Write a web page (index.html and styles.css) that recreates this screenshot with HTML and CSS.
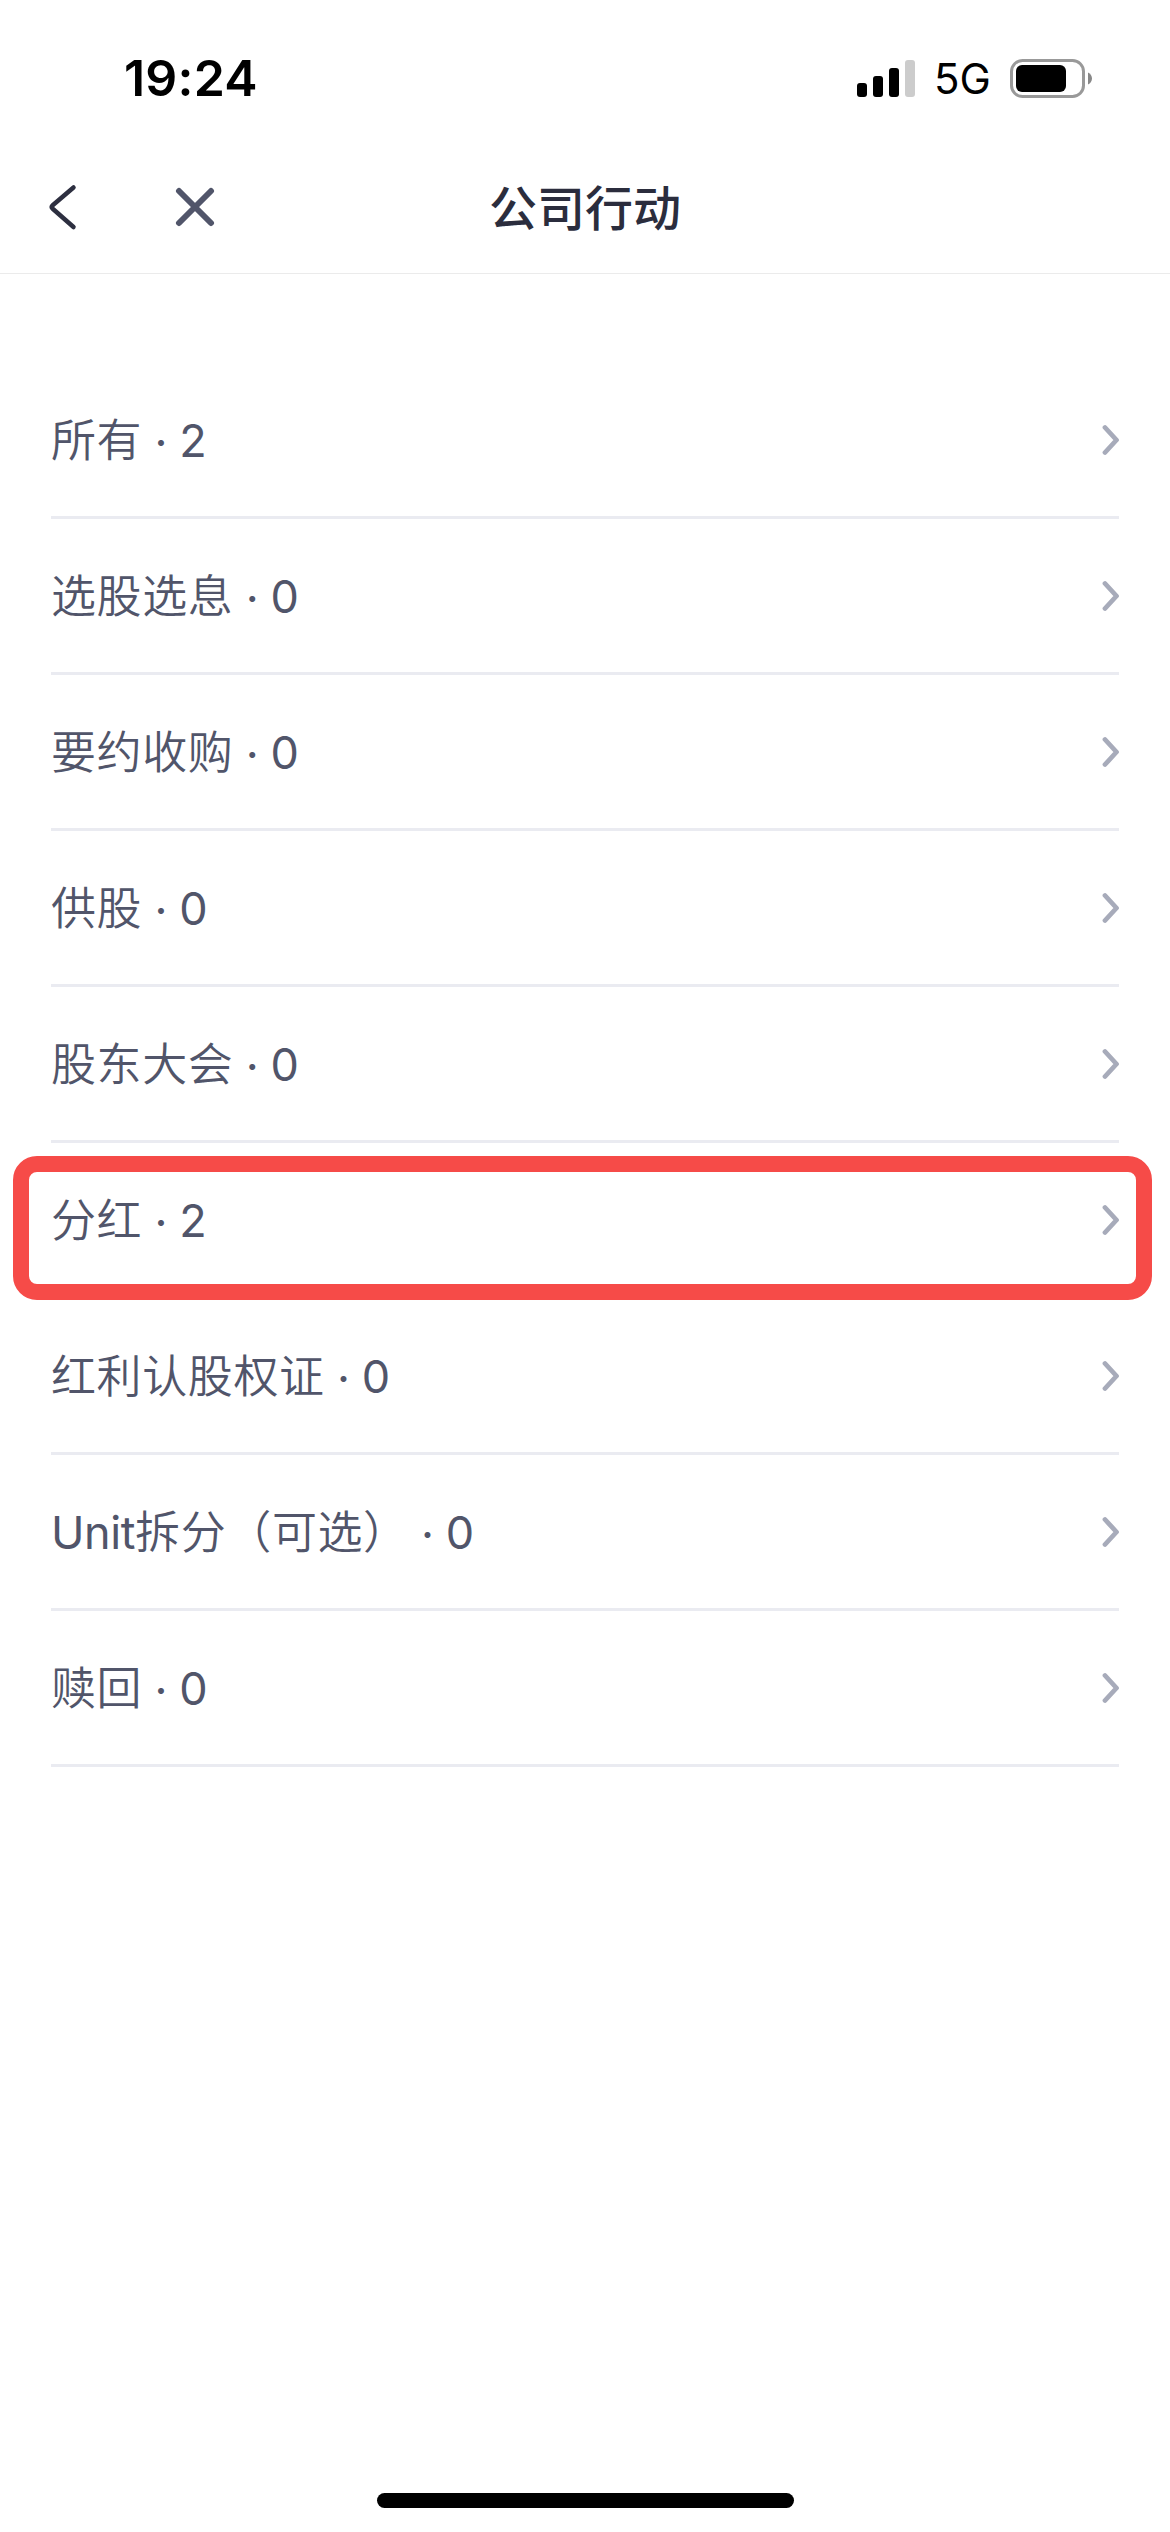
FILE: index.html
```html
<!DOCTYPE html>
<html lang="zh-CN">
<head>
<meta charset="utf-8">
<title>公司行动</title>
<link rel="stylesheet" href="styles.css">
</head>
<body>
<svg class="defs" aria-hidden="true"><symbol id="chevron" viewBox="0 0 18 32"><path d="M4 3.5 15.5 16 4 28.5"/></symbol></svg>
<div class="screen">
  <div class="status">
    <span class="time">19:24</span>
    <div class="indicators">
      <svg class="signal" width="58" height="38" viewBox="0 0 58 38"><rect y="24" width="10" height="14" rx="3"/><rect x="16" y="17" width="10" height="21" rx="3"/><rect x="32" y="9" width="10" height="29" rx="3"/><rect x="48" y="1" width="10" height="37" rx="3" fill="#ccc"/></svg>
      <span class="network">5G</span>
      <svg class="battery" width="83" height="39" viewBox="0 0 83 39"><rect x="1.5" y="1.5" width="72" height="36" rx="11" fill="none" stroke="#999" stroke-width="3"/><rect x="6" y="6" width="50" height="27" rx="6"/><path d="M78 13.5C80.5 14.5 82 17 82 19.5S80.500 24.500 78 25.500Z" fill="#888"/></svg>
    </div>
  </div>
  <header class="navbar">
    <div class="actions">
      <svg class="back" width="30" height="48" viewBox="0 0 30 48"><path d="M25.500 4.500 4.700 22.200Q2.500 24 4.700 25.800L25.500 44"/></svg>
      <svg class="close" width="40" height="40" viewBox="0 0 40 40"><path d="M4 4 36 36M36 4 4 36"/></svg>
    </div>
    <h1 class="title">公司行动</h1>
  </header>
  <ul class="list">
    <li class="row"><span class="label">所有<span class="count"> <span class="dot">·</span> 2</span></span><svg class="chevron"><use href="#chevron"/></svg></li>
    <li class="row"><span class="label">选股选息<span class="count"> <span class="dot">·</span> 0</span></span><svg class="chevron"><use href="#chevron"/></svg></li>
    <li class="row"><span class="label">要约收购<span class="count"> <span class="dot">·</span> 0</span></span><svg class="chevron"><use href="#chevron"/></svg></li>
    <li class="row"><span class="label">供股<span class="count"> <span class="dot">·</span> 0</span></span><svg class="chevron"><use href="#chevron"/></svg></li>
    <li class="row"><span class="label">股东大会<span class="count"> <span class="dot">·</span> 0</span></span><svg class="chevron"><use href="#chevron"/></svg></li>
    <li class="row marked"><span class="label">分红<span class="count"> <span class="dot">·</span> 2</span></span><svg class="chevron"><use href="#chevron"/></svg></li>
    <li class="row"><span class="label">红利认股权证<span class="count"> <span class="dot">·</span> 0</span></span><svg class="chevron"><use href="#chevron"/></svg></li>
    <li class="row"><span class="label"><span class="latin">Unit</span>拆分（可选）<span class="count"> <span class="dot">·</span> 0</span></span><svg class="chevron"><use href="#chevron"/></svg></li>
    <li class="row"><span class="label">赎回<span class="count"> <span class="dot">·</span> 0</span></span><svg class="chevron"><use href="#chevron"/></svg></li>
  </ul>
  <div class="home"></div>
</div>
</body>
</html>
```
FILE: styles.css
```css
* { box-sizing: border-box; }
body { margin: 0; background: #fff; }
.defs { display: block; width: 0; height: 0; }
.screen {
  display: flex;
  flex-direction: column;
  width: 1170px;
  height: 2532px;
  background: #fff;
  font-family: Inter, "Noto Sans CJK SC", sans-serif;
}
.status {
  display: flex;
  justify-content: space-between;
  align-items: center;
  height: 141px;
  padding: 15px 78px 0 124px;
}
.time { font-size: 50px; font-weight: 600; line-height: 60px; letter-spacing: 0.2px; }
.indicators { display: flex; align-items: center; margin-right: -1px; }
.network { margin-left: 19px; width: 76px; font-size: 42px; line-height: 50px; padding-top: 2px; }
.navbar {
  display: grid;
  grid-template-columns: 1fr auto 1fr;
  align-items: center;
  height: 133px;
  padding: 0 48px;
  border-bottom: 1px solid #ebebeb;
}
.actions { display: flex; align-items: center; gap: 97px; }
.back, .close { fill: none; stroke-linecap: round; stroke-linejoin: round; }
.back { stroke: #2d2f40; stroke-width: 4.5; }
.close { stroke: #51556a; stroke-width: 6; }
.title { margin: 0; padding-top: 4px; font-size: 48px; font-weight: 500; line-height: 72px; color: #2b2d3d; }
.list { margin: 0; padding: 89px 51px 0; list-style: none; flex: 1; }
.row {
  position: relative;
  display: flex;
  justify-content: space-between;
  align-items: center;
  height: 156px;
  border-bottom: 3px solid #eaebf1;
}
.label { padding-top: 2px; font-size: 45px; font-weight: 350; line-height: 66px; letter-spacing: 0.6px; color: #51556a; white-space: pre; }
.latin, .count { font-weight: 400; letter-spacing: -0.4px; }
.dot { display: inline-block; line-height: 1; transform: translateY(2px); }
.chevron { width: 18px; height: 32px; fill: none; stroke: #a7abba; stroke-width: 4.8; stroke-linecap: round; stroke-linejoin: round; }
.marked::after {
  content: "";
  position: absolute;
  inset: 13px -33px -4px -38px;
  border: 16px solid #f64b48;
  border-radius: 24px;
}
.home { width: 417px; height: 15px; margin: 0 auto 24px 377px; border-radius: 8px; background: #000; }
```
